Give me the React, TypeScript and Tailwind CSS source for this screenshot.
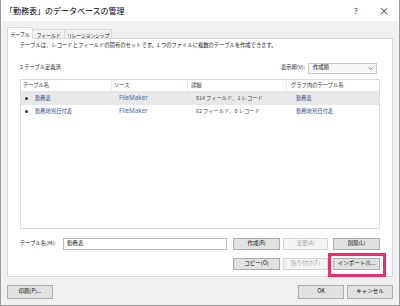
import React from 'react';

const rows = [
  { name: '勤務表', source: 'FileMaker', detail: '914 フィールド、1 レコード', graph: '勤務表', selected: true },
  { name: '勤務地別日付表', source: 'FileMaker', detail: '62 フィールド、0 レコード', graph: '勤務地別日付表', selected: false },
];

function Btn({ label, w, disabled }: { label: string; w: string; disabled?: boolean }) {
  return (
    <div
      className={`${w} h-full flex items-center justify-center border text-[5.5px] leading-none whitespace-nowrap ${
        disabled ? 'bg-[#f4f4f4] border-[#d6d6d6] text-[#a3a3a3]' : 'bg-[#e1e1e1] border-[#adadad] text-[#111]'
      }`}
    >
      {label}
    </div>
  );
}

export default function App() {
  return (
    <div className="w-[400px] h-[306px] flex flex-col bg-[#f0f0f0] border-x border-b border-[#9a9a9a] overflow-hidden whitespace-nowrap font-['Noto_Sans_CJK_JP',sans-serif] text-[#111]">
      {/* title bar */}
      <div className="h-[21px] shrink-0 bg-white flex items-center pl-[4px]">
        <span className="text-[8px] leading-none text-black">「勤務表」のデータベースの管理</span>
        <div className="ml-auto flex items-center h-full">
          <span className="w-[20px] text-center text-[8px] text-[#333]">?</span>
          <span className="w-[30px] ml-[3px] text-center text-[10px] leading-none text-[#333]">×</span>
        </div>
      </div>

      <div className="px-[6px] pt-[6px] flex flex-col">
        {/* tabs */}
        <div className="flex items-end h-[11px]">
          <div className="relative z-10 h-[12px] -mb-px w-[26px] shrink-0 bg-white border border-b-0 border-[#d9d9d9] flex items-center justify-center text-[5px] tracking-[-0.2px] leading-none">
            テーブル
          </div>
          <div className="h-[9px] w-[32px] shrink-0 bg-[#f0f0f0] border border-l-0 border-b-0 border-[#d9d9d9] flex items-center justify-center text-[5px] tracking-[-0.2px] leading-none">
            フィールド
          </div>
          <div className="h-[9px] w-[47px] shrink-0 bg-[#f0f0f0] border border-l-0 border-b-0 border-[#d9d9d9] flex items-center justify-center text-[5px] tracking-[-0.3px] leading-none">
            リレーションシップ
          </div>
        </div>

        {/* panel */}
        <div className="h-[239px] bg-white border border-[#d9d9d9] flex flex-col px-[12px]">
          <div className="mt-[3px] h-[8px] flex items-center text-[5.3px] leading-none text-[#222]">
            テーブルは、レコードとフィールドの固有のセットです。1 つのファイルに複数のテーブルを作成できます。
          </div>

          <div className="mt-[12px] h-[12px] flex items-center pr-[3px]">
            <span className="text-[5.3px] leading-none text-[#222]">2 テーブル定義済</span>
            <span className="ml-auto text-[5.3px] leading-none text-[#222]">表示順(V):</span>
            <div className="ml-[3px] w-[69px] h-[11px] bg-[#f7f7f7] border border-[#cacaca] flex items-center pl-[4px] pr-[3px]">
              <span className="text-[5.3px] leading-none">作成順</span>
              <svg className="ml-auto" width="5" height="3" viewBox="0 0 5 3">
                <path d="M0.5 0.5 L2.5 2.5 L4.5 0.5" stroke="#666" strokeWidth="0.8" fill="none" />
              </svg>
            </div>
          </div>

          {/* table list */}
          <div className="mt-[5px] h-[150px] border border-[#dcdcdc] flex flex-col text-[5.3px] leading-none">
            <div className="h-[12px] flex border-b border-[#e6e6e6] text-[#333]">
              <div className="w-[91px] flex items-center pl-[2px] border-r border-[#ececec]">テーブル名</div>
              <div className="w-[76px] flex items-center pl-[2px] border-r border-[#ececec]">ソース</div>
              <div className="w-[99px] flex items-center pl-[3px] border-r border-[#ececec]">詳細</div>
              <div className="flex-1 flex items-center pl-[4px]">グラフ内のテーブル名</div>
            </div>
            {rows.map((r) => (
              <div key={r.name} className={`h-[13px] flex ${r.selected ? 'bg-[#e8e8e8]' : ''}`}>
                <div className="w-[91px] flex items-center pl-[4px]">
                  <span className="w-[3px] h-[3px] rounded-full bg-[#333]" />
                  <span className="ml-[7px] text-[#2b4c8c]">{r.name}</span>
                </div>
                <div className="w-[76px] flex items-center pl-[7px] text-[6.3px] font-['Noto_Sans',sans-serif] text-[#4d6ea6]">
                  {r.source}
                </div>
                <div className="w-[99px] flex items-center pl-[8px] text-[#444]">{r.detail}</div>
                <div className="flex-1 flex items-center pl-[9px] text-[#2b4c8c]">{r.graph}</div>
              </div>
            ))}
          </div>

          {/* name + buttons */}
          <div className="mt-[8px] h-[13px] flex items-center">
            <span className="w-[43px] text-[5.3px] leading-none text-[#222]">テーブル名(M):</span>
            <div className="w-[164px] h-[12px] bg-white border border-[#bdbdbd] flex items-center pl-[3px] text-[5.5px] leading-none">
              勤務表
            </div>
            <div className="ml-[6px] h-[12px] flex">
              <Btn label="作成(R)" w="w-[47px]" />
              <div className="ml-[3px] h-full"><Btn label="変更(A)" w="w-[45px]" disabled /></div>
              <div className="ml-[5px] h-full"><Btn label="削除(L)" w="w-[47px]" /></div>
            </div>
          </div>
          <div className="mt-[8px] h-[12px] flex pl-[213px]">
            <Btn label="コピー(O)" w="w-[47px]" />
            <div className="ml-[3px] h-full"><Btn label="貼り付け(T)" w="w-[45px]" disabled /></div>
            <div className="relative ml-[5px] h-full">
              <Btn label="インポート(I)..." w="w-[47px]" />
              <div className="absolute -left-[5px] -right-[6px] -top-[5px] -bottom-[7px] border-[3px] border-[#e2326e]" />
            </div>
          </div>
        </div>

        {/* bottom buttons */}
        <div className="mt-[8px] h-[14px] flex">
          <Btn label="印刷(P)..." w="w-[46px]" />
          <div className="ml-auto h-full flex gap-[3px]">
            <Btn label="OK" w="w-[46px]" />
            <Btn label="キャンセル" w="w-[46px]" />
          </div>
        </div>
      </div>
    </div>
  );
}
